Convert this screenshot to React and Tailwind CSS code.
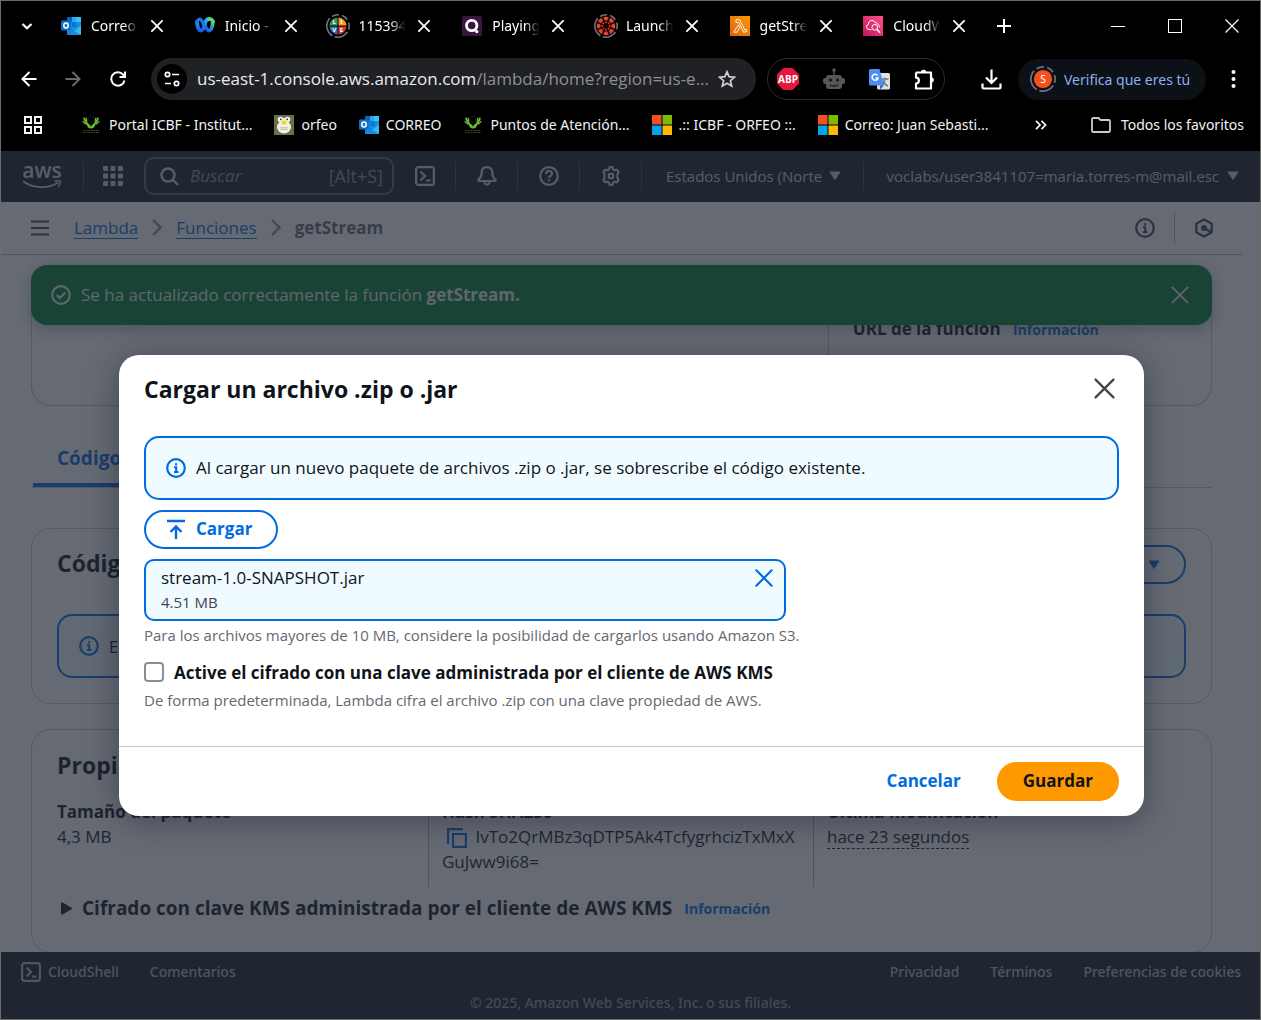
import React from "react";

/* ---------- Favicons and brand drawings ---------- */

function OutlookIcon() {
  return (
    <svg className="size-5 shrink-0" viewBox="0 0 20 20" aria-hidden="true">
      <rect x="6" y="1" width="14" height="14" fill="#1490df" />
      <rect x="6" y="1" width="5" height="5" fill="#0364b8" />
      <rect x="11" y="1" width="9" height="5" fill="#28a8ea" />
      <rect x="15" y="1" width="5" height="5" fill="#3cc0f5" />
      <rect x="11" y="6" width="4.500" height="5" fill="#0a78d0" />
      <path d="M6 9.500 13 14l7-4.500V18a1 1 0 0 1-1 1H7a1 1 0 0 1-1-1z" fill="#1688dc" />
      <path d="M20 9.500V18a1 1 0 0 1-1 1H8z" fill="#35b8f1" />
      <path d="m8 19 5-4.200 6.500 4.200z" fill="#1a8be0" />
      <rect x="0" y="4.500" width="10" height="10" rx="1" fill="#0f6fc8" />
      <ellipse cx="5" cy="9.500" rx="2.200" ry="2.500" fill="none" stroke="#fff" strokeWidth="1.500" />
    </svg>
  );
}

function WebexIcon() {
  return (
    <svg className="size-5 shrink-0" viewBox="0 0 20 20" fill="none" aria-hidden="true">
      <defs>
        <linearGradient id="wx1" x1="0" y1="0" x2="0" y2="1">
          <stop offset="0" stopColor="#1fb4e8" />
          <stop offset="1" stopColor="#1c5bf0" />
        </linearGradient>
        <linearGradient id="wx2" x1="0" y1="1" x2="1" y2="0">
          <stop offset="0" stopColor="#1648d8" />
          <stop offset="0.500" stopColor="#2383f0" />
          <stop offset="1" stopColor="#5fdc6a" />
        </linearGradient>
      </defs>
      <path d="M17.800 5.500c-.3 5-1.600 9-4 9s-3.500-4-4.500-7" stroke="url(#wx2)" strokeWidth="3.800" strokeLinecap="round" />
      <path d="M2 6c.3 4.500 1.700 8.500 4 8.500 2.800 0 3.200-5 4.500-8.500.8-1.800 2-3 3.500-3" stroke="url(#wx1)" strokeWidth="3.800" strokeLinecap="round" />
      <path d="M2.200 6c.4-2.400 2.200-3.400 3.600-2.400C7.500 4.800 8 7.500 9 10" stroke="#1d74f0" strokeWidth="3.200" strokeLinecap="round" />
      <path d="M14 3.200c2.300-.4 3.700.7 3.900 2.600" stroke="#57d977" strokeWidth="3.600" strokeLinecap="round" />
    </svg>
  );
}

function DashedRing() {
  return (
    <circle cx="12" cy="12" r="11.200" fill="none" stroke="#6f7276" strokeWidth="1.600" strokeDasharray="20 3 7 3 7 3 7 3 14.400 3" transform="rotate(120 12 12)" />
  );
}

function LiveIcon() {
  return (
    <svg className="size-6 shrink-0" viewBox="0 0 24 24" aria-hidden="true">
      <DashedRing />
      <path d="M11.500 11.500V3.500a8.500 8.500 0 0 0-8 8z" fill="#2e9e57" />
      <path d="M12.500 11.500V3.500a8.500 8.500 0 0 1 8 8z" fill="#f0a023" />
      <path d="M11.500 12.500v8a8.500 8.500 0 0 1-8-8z" fill="#2f6fc0" />
      <path d="M12.500 12.500v8a8.500 8.500 0 0 0 8-8z" fill="#d8392f" />
      <g fill="#fff" fontSize="6" fontWeight="700" fontFamily="Open Sans, sans-serif" textAnchor="middle">
        <text x="8.300" y="10.200">L</text>
        <text x="15.500" y="10.200">I</text>
        <text x="8.300" y="18.200">V</text>
        <text x="15.500" y="18.200">E</text>
      </g>
    </svg>
  );
}

function QIcon() {
  return (
    <svg className="size-5 shrink-0" viewBox="0 0 20 20" aria-hidden="true">
      <rect width="20" height="20" rx="2" fill="#38173f" />
      <circle cx="9.700" cy="9.500" r="5.200" fill="none" stroke="#fff" strokeWidth="2.800" />
      <circle cx="14.800" cy="15.600" r="1.700" fill="#fff" />
    </svg>
  );
}

function CanvasIcon() {
  const a = [0, 45, 90, 135, 180, 225, 270, 315];
  return (
    <svg className="size-6 shrink-0" viewBox="0 0 24 24" aria-hidden="true">
      <DashedRing />
      <circle cx="12" cy="12" r="9.200" fill="#1a0503" />
      {a.map((d) => (
        <g key={d} transform={`rotate(${d} 12 12)`}>
          <path d="M9.300 3.200a9.200 9.200 0 0 1 5.400 0l-.9 2.400a2 2 0 0 1-3.600 0z" fill="#e8432d" />
          <circle cx="12" cy="8.300" r="0.900" fill="#e8432d" />
        </g>
      ))}
    </svg>
  );
}

function LambdaIcon() {
  return (
    <svg className="size-5 shrink-0" viewBox="0 0 20 20" aria-hidden="true">
      <defs>
        <linearGradient id="lam" x1="0" y1="1" x2="1" y2="0">
          <stop offset="0" stopColor="#d86613" />
          <stop offset="1" stopColor="#f90" />
        </linearGradient>
      </defs>
      <rect width="20" height="20" fill="url(#lam)" />
      <path d="M6 3.800h3.800l5 10.200 1.500-.6.600 1.800-3.200 1.200-4.700-9.800H6zM8.300 9 3.800 16.200h3.200l2.800-5z" fill="none" stroke="#fff" strokeWidth="0.900" strokeLinejoin="round" />
    </svg>
  );
}

function CloudWatchIcon() {
  return (
    <svg className="size-5 shrink-0" viewBox="0 0 20 20" aria-hidden="true">
      <defs>
        <linearGradient id="cw" x1="0" y1="1" x2="1" y2="0">
          <stop offset="0" stopColor="#c21560" />
          <stop offset="1" stopColor="#ff4f8b" />
        </linearGradient>
      </defs>
      <rect width="20" height="20" fill="url(#cw)" />
      <g fill="none" stroke="#fff" strokeWidth="1" strokeLinecap="round">
        <path d="M8 13.500H6.200a2.700 2.700 0 0 1-.7-5.300c-.1-2.300 1.500-3.700 3.400-3.700 1.700 0 2.800.9 3.300 2.200 1.300-.5 2.400.3 2.500 1.700 1.300.3 2 1.200 2 2.500" />
        <circle cx="11.800" cy="11.300" r="2.900" />
        <path d="m14 13.500 2.700 2.800" strokeWidth="1.500" />
      </g>
    </svg>
  );
}

function HandsIcon() {
  return (
    <svg className="size-5 shrink-0" viewBox="0 0 20 20" fill="none" aria-hidden="true">
      <circle cx="9" cy="4" r="3" stroke="#3a3a3a" strokeWidth="0.800" strokeDasharray="1.500 1" />
      <path d="M2.200 3.500c.8 3 2.600 5 5.300 7.800M15.800 3.500c-.8 3-2.600 5-5.300 7.800" stroke="#6cb83a" strokeWidth="2" strokeLinecap="round" />
      <path d="m1 6.500 2.500 2.500M4.200 3l.6 3.500M17 6.500 14.500 9M13.800 3l-.6 3.500" stroke="#6cb83a" strokeWidth="1.200" strokeLinecap="round" />
      <path d="M4.500 8.500c2.200.2 3.800 1.400 4.500 3.400.7-2 2.300-3.200 4.500-3.400-.3 3-2 5-4.500 5s-4.200-2-4.500-5z" fill="#6cb83a" />
      <path d="M1 15.500h16M1 17.500h16" stroke="#33421f" strokeWidth="1" strokeDasharray="2 0.600" />
    </svg>
  );
}

function OrfeoIcon() {
  return (
    <svg className="size-5 shrink-0" viewBox="0 0 20 20" aria-hidden="true">
      <rect width="20" height="20" fill="#6b7040" />
      <ellipse cx="10" cy="12" rx="7" ry="6.500" fill="#f1f1ea" />
      <circle cx="6.500" cy="4.500" r="2.800" fill="#f1f1ea" />
      <circle cx="13.500" cy="4.500" r="2.800" fill="#f1f1ea" />
      <circle cx="10" cy="7" r="4" fill="#f1f1ea" />
      <circle cx="6.800" cy="4.300" r="0.900" fill="#333" />
      <circle cx="13.200" cy="4.300" r="0.900" fill="#333" />
      <path d="M7.200 6.500 10 5.500l2.800 1-1 2.500L10 9.800 8.200 9z" fill="#f1d51e" />
      <path d="M6 12.800h8M6.500 14.500h7" stroke="#b9b9ae" strokeWidth="1" />
    </svg>
  );
}

function MicrosoftIcon() {
  return (
    <svg className="size-5 shrink-0" viewBox="0 0 20 20" aria-hidden="true">
      <rect width="9.500" height="9.500" fill="#f25022" />
      <rect x="10.500" width="9.500" height="9.500" fill="#7fba00" />
      <rect y="10.500" width="9.500" height="9.500" fill="#00a4ef" />
      <rect x="10.500" y="10.500" width="9.500" height="9.500" fill="#ffb900" />
    </svg>
  );
}

/* ---------- Line icons ---------- */

function CrossIcon({ className, width = 2 }) {
  return (
    <svg className={className} viewBox="0 0 20 20" fill="none" stroke="currentColor" strokeWidth={width} strokeLinecap="round" aria-hidden="true">
      <path d="m1.500 1.500 17 17M18.500 1.500l-17 17" />
    </svg>
  );
}

function InfoIcon() {
  return (
    <svg className="size-5 shrink-0" viewBox="0 0 20 20" fill="none" stroke="currentColor" strokeWidth="2.200" aria-hidden="true">
      <circle cx="10" cy="10" r="8.800" />
      <path d="M8 9.200h2.200v4.500M8 14h4.400M9 6.300h2.200" strokeWidth="2" />
    </svg>
  );
}

function CaretDown() {
  return (
    <svg className="h-[10px] w-3 shrink-0" viewBox="0 0 12 10" aria-hidden="true">
      <path d="M1 1h10L6 8.500z" fill="currentColor" stroke="currentColor" strokeLinejoin="round" />
    </svg>
  );
}

function ShellIcon() {
  return (
    <svg className="size-5 shrink-0" viewBox="0 0 20 20" fill="none" stroke="currentColor" strokeWidth="2.200" aria-hidden="true">
      <rect x="1.100" y="1.100" width="17.800" height="17.800" rx="2.500" />
      <path d="m5.500 5.500 4.500 4.500-4.500 4.500M11 14.500h4.500" />
    </svg>
  );
}

/* ---------- Browser frame ---------- */

const tabs = [
  { icon: <OutlookIcon />, title: "Correo" },
  { icon: <WebexIcon />, title: "Inicio -" },
  { icon: <LiveIcon />, title: "115394", big: true },
  { icon: <QIcon />, title: "Playing" },
  { icon: <CanvasIcon />, title: "Launch", big: true },
  { icon: <LambdaIcon />, title: "getStre" },
  { icon: <CloudWatchIcon />, title: "CloudW" },
];

function TabStrip() {
  return (
    <div className="flex h-[49px] items-center text-white">
      <button aria-label="Buscar pestañas" className="flex w-[60px] pl-5">
        <svg className="size-3" viewBox="0 0 12 12" fill="none" stroke="currentColor" strokeWidth="2.200"><path d="m1.500 4 4.500 4.200L10.500 4" /></svg>
      </button>
      <div className="flex min-w-0 flex-1">
        {tabs.map((t) => (
          <div key={t.title} className="flex min-w-0 flex-1 items-center">
            <span className={t.big ? "-mx-[2px] flex" : "flex"}>{t.icon}</span>
            <span className="ml-[10px] w-[50px] text-[14px] leading-6 whitespace-nowrap [mask-image:linear-gradient(to_right,#000_65%,transparent_95%)]">{t.title}</span>
            <button aria-label="Cerrar pestaña" className="ml-[10px]"><CrossIcon className="size-3" width={3} /></button>
          </div>
        ))}
      </div>
      <button aria-label="Nueva pestaña">
        <svg className="size-[14px]" viewBox="0 0 14 14" stroke="currentColor" strokeWidth="2"><path d="M7 0v14M0 7h14" /></svg>
      </button>
      <div className="ml-[100px] flex items-center gap-[43px] pr-[21px]">
        <button aria-label="Minimizar"><svg className="size-[14px]" viewBox="0 0 14 14" stroke="currentColor"><path d="M0 7.500h14" /></svg></button>
        <button aria-label="Maximizar"><svg className="size-[14px]" viewBox="0 0 14 14" fill="none" stroke="currentColor"><rect x=".5" y=".5" width="13" height="13" /></svg></button>
        <button aria-label="Cerrar"><svg className="size-[14px]" viewBox="0 0 14 14" stroke="currentColor" strokeWidth="1.200"><path d="m.5.5 13 13M13.500.5l-13 13" /></svg></button>
      </div>
    </div>
  );
}

function Toolbar() {
  return (
    <div className="flex h-[58px] items-center pl-5 text-white">
      <button aria-label="Atrás"><svg className="size-4" viewBox="0 0 16 16" fill="none" stroke="currentColor" strokeWidth="2"><path d="M15.500 8H2M8.500 1 1.500 8l7 7" /></svg></button>
      <button aria-label="Adelante" className="ml-7 text-[#6a6a6a]"><svg className="size-4" viewBox="0 0 16 16" fill="none" stroke="currentColor" strokeWidth="2"><path d="M.5 8H14M7.500 1l7 7-7 7" /></svg></button>
      <button aria-label="Recargar" className="ml-[29px]"><svg className="size-4" viewBox="0 0 16 16" fill="none" stroke="currentColor" strokeWidth="2"><path d="M14.500 9.500A6.700 6.700 0 1 1 13 3.500L14.500 5M15 .5V6H9.500" /></svg></button>
      <div className="ml-[25px] flex h-[42px] min-w-0 flex-1 items-center rounded-full bg-[#202124] pr-5 pl-[6px]">
        <button aria-label="Información del sitio" className="flex size-[30px] shrink-0 items-center justify-center rounded-full bg-black">
          <svg className="size-4" viewBox="0 0 16 16" fill="none" stroke="currentColor" strokeWidth="1.700"><circle cx="3.500" cy="3.500" r="2.200" /><path d="M8 3.500h7M1 12.500h6" /><circle cx="12.500" cy="12.500" r="2.200" /></svg>
        </button>
        <div className="ml-[10px] min-w-0 flex-1 font-['Open_Sans','Noto_Sans',sans-serif] text-[17px] whitespace-nowrap text-[#8d9094]">
          <span className="text-[#e8eaed]">us-east-1.console.aws.amazon.com</span>/lambda/home?region=us-e...
        </div>
        <button aria-label="Añadir a favoritos" className="ml-1 text-[#cdcfd2]">
          <svg className="size-[18px]" viewBox="0 0 18 18" fill="none" stroke="currentColor" strokeWidth="1.700"><path d="m9 1.800 2.100 4.900 5.400.5-4.100 3.500 1.300 5.300L9 13.200 4.300 16l1.300-5.300L1.500 7.200l5.400-.5z" /></svg>
        </button>
      </div>
      <div className="ml-[11px] flex h-[42px] w-[178px] shrink-0 items-center justify-between rounded-full border border-[#2d2d2d] pr-[9px] pl-[9px]">
        <button aria-label="Adblock Plus">
          <svg className="size-[22px]" viewBox="0 0 22 22"><path d="M6.500 0h9L22 6.500v9L15.500 22h-9L0 15.500v-9z" fill="#e8163c" /><text x="11" y="15" textAnchor="middle" fontSize="10" fontWeight="700" fontFamily="Open Sans, sans-serif" fill="#fff">ABP</text></svg>
        </button>
        <button aria-label="Asistente">
          <svg className="size-[22px]" viewBox="0 0 22 22"><g fill="#565656"><rect x="3" y="7" width="16" height="14" rx="3" /><rect x="0" y="10" width="22" height="6" rx="2" /><circle cx="11" cy="2" r="1.800" /><path d="M10.300 2h1.400v6h-1.400z" /></g><circle cx="7.500" cy="12" r="1.600" fill="#161616" /><circle cx="14.500" cy="12" r="1.600" fill="#161616" /><path d="M7 17c2.500 1.300 5.500 1.300 8 0" stroke="#161616" strokeWidth="1.300" fill="none" /></svg>
        </button>
        <button aria-label="Traductor de Google">
          <svg className="size-[21px]" viewBox="0 0 21 21"><rect x="8" y="4" width="13" height="16.500" rx="1.500" fill="#dfe2e5" /><path d="M12.500 10h7M16 8.500V10c0 3-1.500 5.500-4 7M14 11.500c.7 2.500 2.300 4.500 5 5.700" stroke="#70757a" strokeWidth="1.300" fill="none" /><path d="M1.500 0h9L15 16.500H1.500A1.500 1.500 0 0 1 0 15V1.500A1.500 1.500 0 0 1 1.500 0z" fill="#4f8df5" /><path d="m15 16.500-4 4v-4z" fill="#3060c8" /><path d="M8.600 6.600A3 3 0 1 0 9 9H6.500" stroke="#fff" strokeWidth="1.500" fill="none" /></svg>
        </button>
        <button aria-label="Extensiones">
          <svg className="size-[21px]" viewBox="0 0 21 21" fill="none" stroke="currentColor" strokeWidth="2.200"><path d="M2 3.500h15v5.300M17 13.200v6.300H2v-5a2.900 2.900 0 0 0 0-5.800V3.500M17 8v6" strokeLinejoin="round" /><path d="M7.200 3.500a2.400 2.400 0 0 1 4.800 0zM17 8.600a2.400 2.400 0 0 1 0 4.800z" fill="currentColor" strokeWidth="1" /></svg>
        </button>
      </div>
      <button aria-label="Descargas" className="ml-9">
        <svg className="size-[21px]" viewBox="0 0 21 21" fill="none" stroke="currentColor" strokeWidth="2.200"><path d="M10.500.5V14M5 8.500l5.500 5.500L16 8.500M1.500 14.500v4a1 1 0 0 0 1 1h16a1 1 0 0 0 1-1v-4" /></svg>
      </button>
      <button className="ml-4 flex h-[41px] w-[188px] shrink-0 items-center rounded-full bg-[#0c1017] pl-3 text-[14px] text-[#8ab0f0]">
        <svg className="size-[26px]" viewBox="0 0 24 24" aria-hidden="true"><DashedRing /><circle cx="12" cy="12" r="8.400" fill="#f4511e" /><text x="12" y="15.500" textAnchor="middle" fontSize="9.500" fill="#fff">S</text></svg>
        <span className="ml-2 whitespace-nowrap">Verifica que eres tú</span>
      </button>
      <button aria-label="Menú de Chrome" className="mr-[24px] ml-[25px]">
        <svg className="h-[18px] w-[5px]" viewBox="0 0 5 18" fill="currentColor"><circle cx="2.500" cy="2" r="2" /><circle cx="2.500" cy="9" r="2" /><circle cx="2.500" cy="16" r="2" /></svg>
      </button>
    </div>
  );
}

const bookmarks = [
  { icon: <HandsIcon />, label: "Portal ICBF - Institut..." },
  { icon: <OrfeoIcon />, label: "orfeo" },
  { icon: <OutlookIcon />, label: "CORREO" },
  { icon: <HandsIcon />, label: "Puntos de Atención..." },
  { icon: <MicrosoftIcon />, label: ".:: ICBF - ORFEO ::." },
  { icon: <MicrosoftIcon />, label: "Correo: Juan Sebasti..." },
];

function BookmarksBar() {
  return (
    <nav aria-label="Favoritos" className="flex h-[43px] items-center pb-[10px] pl-[23px] text-[14px] whitespace-nowrap text-[#f1f3f4]">
      <button aria-label="Grupos de pestañas">
        <svg className="size-[18px]" viewBox="0 0 18 18" fill="none" stroke="currentColor" strokeWidth="2"><path d="M1 1h6v6H1zM11 1h6v6h-6zM1 11h6v6H1zM11 11h6v6h-6z" /></svg>
      </button>
      <div className="ml-10 flex items-center gap-[22px]">
        {bookmarks.map((b) => (
          <a key={b.label} href="#" className="flex items-center gap-[7px]">{b.icon}{b.label}</a>
        ))}
      </div>
      <button aria-label="Más favoritos" className="ml-auto">
        <svg className="h-[10px] w-3" viewBox="0 0 12 10" fill="none" stroke="currentColor" strokeWidth="1.800"><path d="m1 .8 4 4.200-4 4.200M6.500.8l4 4.200-4 4.200" /></svg>
      </button>
      <a href="#" className="mr-4 ml-11 flex items-center gap-[10px]">
        <svg className="h-4 w-5" viewBox="0 0 20 16" fill="none" stroke="#c9cbce" strokeWidth="1.800"><path d="M1 2.200A1.200 1.200 0 0 1 2.200 1H7.500l2 2h8.300A1.200 1.200 0 0 1 19 4.200v9.600a1.200 1.200 0 0 1-1.200 1.200H2.200A1.200 1.200 0 0 1 1 13.800z" /></svg>
        Todos los favoritos
      </a>
    </nav>
  );
}

/* ---------- AWS console ---------- */

function NavCell({ label, children }) {
  return (
    <div className="flex h-[30px] w-[62px] shrink-0 items-center justify-center border-r border-[#424650]">
      <button aria-label={label}>{children}</button>
    </div>
  );
}

function ConsoleHeader() {
  return (
    <header className="flex h-[51px] items-center bg-[#161d26] pb-px text-[15px] font-medium text-[#d0d2d6]">
      <a href="#" aria-label="AWS" className="ml-[21px] flex w-10 flex-col items-center pb-1">
        <span className="text-[21px] leading-5 font-semibold">aws</span>
        <svg className="h-[9px] w-10" viewBox="0 0 40 9" fill="none" stroke="currentColor" strokeWidth="1.800" strokeLinecap="round"><path d="M1.500 1.500c10 7 24 7.500 34 1.500" /><path d="M33 1.200c2-.6 4-.8 5.200-.2.500 1.200-.3 3.600-1.800 5.500" strokeWidth="1.500" /></svg>
      </a>
      <div className="ml-[21px] h-[30px] w-px bg-[#424650]" />
      <button aria-label="Servicios" className="ml-[19px]">
        <svg className="size-5" viewBox="0 0 20 20" fill="currentColor">
          {[0, 7.5, 15].map((y) => [0, 7.5, 15].map((x) => <rect key={`${x}-${y}`} x={x} y={y} width="5" height="5" rx="1" />))}
        </svg>
      </button>
      <label className="ml-[21px] flex h-[38px] w-[250px] items-center rounded-[10px] border-2 border-[#5b616c] pr-[9px] pl-[14px]">
        <svg className="size-[19px] shrink-0" viewBox="0 0 19 19" fill="none" stroke="currentColor" strokeWidth="2.400"><circle cx="8" cy="8" r="6.500" /><path d="m12.500 12.500 5.500 5.500" /></svg>
        <input type="search" aria-label="Buscar" placeholder="Buscar" className="ml-[11px] w-0 min-w-0 flex-1 bg-transparent text-[17px] italic outline-none placeholder:text-[#8a909b]" />
        <span className="text-[18px] font-normal text-[#8a909b]">[Alt+S]</span>
      </label>
      <NavCell label="CloudShell"><ShellIcon /></NavCell>
      <NavCell label="Notificaciones">
        <svg className="size-5" viewBox="0 0 20 20" fill="none" stroke="currentColor" strokeWidth="2.200" strokeLinejoin="round"><path d="M10 1.200C6.500 1.200 4.700 3.300 4.700 6.500 4.700 10.500 3.500 12 1.500 13.500V15h17v-1.500c-2-1.500-3.200-3-3.200-7C15.300 3.300 13.500 1.200 10 1.200z" /><path d="M7.300 15.500c.2 2 1.200 3 2.700 3s2.500-1 2.700-3" /></svg>
      </NavCell>
      <NavCell label="Ayuda">
        <svg className="size-5" viewBox="0 0 20 20" fill="none" stroke="currentColor" strokeWidth="2.200"><circle cx="10" cy="10" r="8.800" /><path d="M7 8c0-1.900 1.200-3 3-3s3 1.100 3 2.700c0 2-3 2.200-3 4.300M10 13.300v2" /></svg>
      </NavCell>
      <NavCell label="Configuración">
        <svg className="size-5" viewBox="0 0 20 20" fill="none" stroke="currentColor" strokeWidth="2.200" strokeLinejoin="round"><path d="M8.500 1.200h3l.7 2.300 1.400.8 2.300-.6 1.700 2.300L16.400 8.200v3.600l1.200 2.200-1.700 2.300-2.300-.6-1.400.8-.7 2.300h-3l-.7-2.300-1.400-.8-2.300.6L2.400 14l1.200-2.200V8.200L2.400 6l1.700-2.300 2.300.6 1.400-.8z" /><circle cx="10" cy="10" r="2.400" /></svg>
      </NavCell>
      <button className="flex h-[30px] w-[222px] shrink-0 items-center gap-[7px] border-r border-[#424650] pl-6 whitespace-nowrap">Estados Unidos (Norte <CaretDown /></button>
      <button className="mr-[21px] ml-auto flex items-center gap-[8px] whitespace-nowrap">voclabs/user3841107=maria.torres-m@mail.esc <CaretDown /></button>
    </header>
  );
}

function Chevron() {
  return (
    <svg className="h-[17px] w-[10px]" viewBox="0 0 10 17" fill="none" stroke="#8c8c94" strokeWidth="2.400" aria-hidden="true"><path d="m1 1 7.500 7.500L1 16" /></svg>
  );
}

function Breadcrumbs() {
  return (
    <div className="mr-[18px] flex h-[53px] items-center border-b border-[#b4b4bb] pb-px pl-[30px] text-[17px] leading-[21px]">
      <button aria-label="Abrir navegación" className="text-[#424650]">
        <svg className="h-4 w-[18px]" viewBox="0 0 18 16" stroke="currentColor" strokeWidth="2.200"><path d="M0 1.500h18M0 8h18M0 14.500h18" /></svg>
      </button>
      <nav aria-label="Ruta" className="ml-[25px] flex items-center gap-[14px]">
        <a href="#" className="border-b border-[#006ce0] text-[#006ce0]">Lambda</a>
        <Chevron />
        <a href="#" className="border-b border-[#006ce0] text-[#006ce0]">Funciones</a>
        <Chevron />
        <span className="font-bold text-[#656871]">getStream</span>
      </nav>
      <div className="mr-[28px] ml-auto flex items-center text-[#424650]">
        <button aria-label="Información"><InfoIcon /></button>
        <div className="mx-[19px] h-8 w-px bg-[#b4b4bb]" />
        <button aria-label="Amazon Q">
          <svg className="size-5" viewBox="0 0 20 20" fill="none" stroke="currentColor" strokeWidth="2.200" strokeLinejoin="round"><path d="m10 1.500 7.700 4.300v8.400L10 18.500l-7.700-4.300V5.800z" /><path d="m10 10 7 4" /><circle cx="10" cy="10" r="2" fill="currentColor" /></svg>
        </button>
      </div>
    </div>
  );
}

function FunctionPage() {
  return (
    <main className="mr-[18px] -mb-px flex-1 overflow-hidden px-[30px] pt-[10px] text-[17px] leading-[25px]">
      <div role="status" className="relative flex h-[60px] items-center rounded-[16px] bg-[#00802f] pr-[23px] pl-5 font-medium text-[#ebebf0] shadow-[0_4px_16px_rgba(0,7,22,0.3)]">
        <svg className="size-5" viewBox="0 0 20 20" fill="none" stroke="currentColor" strokeWidth="2.200" aria-hidden="true"><circle cx="10" cy="10" r="8.800" /><path d="m5.800 10 3 3 5.500-5.500" /></svg>
        <p className="ml-[10px] pb-0.5">Se ha actualizado correctamente la función <b>getStream.</b></p>
        <button aria-label="Cerrar aviso" className="ml-auto"><CrossIcon className="size-[18px]" /></button>
      </div>

      <section className="-mt-4 grid h-[97px] grid-cols-[27fr_13fr] rounded-b-[20px] border border-t-0 border-[#c6c6cd]">
        <div />
        <div className="mb-[46px] border-l border-[#c6c6cd] pt-[7px] pl-6 text-[#0f141a]">
          <h3 className="font-bold">URL de la función <a href="#" className="ml-2 text-[14px] text-[#006ce0]">Información</a></h3>
          <p>-</p>
        </div>
      </section>

      <div role="tablist" className="mt-8 flex border-b border-[#c6c6cd]">
        <button role="tab" aria-selected="true" className="ml-[2px] rounded-t-sm border-b-4 border-[#006ce0] px-6 pt-2 pb-3 text-[19px] font-bold text-[#006ce0]">Código</button>
      </div>

      <section className="mt-10 h-[176px] rounded-[20px] border border-[#c6c6cd] px-[25px] pt-4">
        <div className="flex h-[39px] items-center justify-between">
          <h2 className="pb-0.5 text-[23px] font-bold text-[#0f141a]">Código</h2>
          <button className="flex h-[39px] items-center gap-2 rounded-full border-2 border-[#006ce0] px-6 font-bold text-[#006ce0]">Cargar desde <CaretDown /></button>
        </div>
        <div className="mt-[30px] flex h-16 items-center gap-[10px] rounded-[15px] border-2 border-[#006ce0] bg-[#f0fbff] px-5 text-[#0f141a]">
          <span className="text-[#006ce0]"><InfoIcon /></span>El
        </div>
      </section>

      <section className="mt-[25px] h-[224px] rounded-[20px] border border-[#c6c6cd] px-[25px] pt-[21px] text-[#0f141a]">
        <h2 className="text-[23px] leading-7 font-bold">Propiedades</h2>
        <dl className="mt-5 grid grid-cols-3 gap-[26px]">
          <div>
            <dt className="font-bold">Tamaño del paquete</dt>
            <dd>4,3 MB</dd>
          </div>
          <div className="-ml-[14px] border-l border-[#b4b4bb] pb-[13px] pl-[13px]">
            <dt className="font-bold">Hash SHA256</dt>
            <dd className="break-all">
              <button aria-label="Copiar hash" className="mr-1 ml-[5px] align-middle text-[#006ce0]">
                <svg className="size-5" viewBox="0 0 20 20" fill="none" stroke="currentColor" strokeWidth="2.200"><path d="M1.100 16V1.100H16M6 6h12.900v12.900H6z" /></svg>
              </button>{" "}
              IvTo2QrMBz3qDTP5Ak4TcfygrhcizTxMxXGuJww9i68=
            </dd>
          </div>
          <div className="-ml-[14px] border-l border-[#b4b4bb] pl-[13px]">
            <dt className="font-bold">Última modificación</dt>
            <dd><span className="inline-block border-b border-dashed border-[#0f141a] leading-[22px]">hace 23 segundos</span></dd>
          </div>
        </dl>
        <div className="mt-[9px] flex items-center">
          <button className="flex items-center gap-[10px] text-[19px] font-bold">
            <svg className="ml-1 h-[13px] w-[11px]" viewBox="0 0 11 13" fill="currentColor" aria-hidden="true"><path d="M0 1.200v10.600a1 1 0 0 0 1.500.8l9-5.300a1 1 0 0 0 0-1.600l-9-5.300A1 1 0 0 0 0 1.200z" /></svg>
            Cifrado con clave KMS administrada por el cliente de AWS KMS
          </button>
          <a href="#" className="ml-3 text-[14px] font-bold text-[#006ce0]">Información</a>
        </div>
      </section>
    </main>
  );
}

function ConsoleFooter() {
  return (
    <footer className="relative h-[67px] bg-[#161d26] pt-[7px] font-['Noto_Sans','Open_Sans',sans-serif] text-[14px] leading-[25px] font-medium text-[#b6bac1]">
      <div className="flex items-center gap-[31px] pr-[19px] pl-5">
        <a href="#" className="flex items-center gap-[7px]"><ShellIcon />CloudShell</a>
        <a href="#">Comentarios</a>
        <a href="#" className="ml-auto">Privacidad</a>
        <a href="#">Términos</a>
        <a href="#">Preferencias de cookies</a>
      </div>
      <p className="mt-[6px] text-center text-[#8c919b]">© 2025, Amazon Web Services, Inc. o sus filiales.</p>
    </footer>
  );
}

function UploadDialog() {
  return (
    <div role="dialog" aria-modal="true" aria-labelledby="dlg-title" className="w-full max-w-[1025px] rounded-[20px] bg-white text-[17px] leading-[25px] text-[#0f141a] shadow-[0_4px_32px_rgba(0,7,22,0.35)]">
      <div className="px-[25px] pt-5 pb-[35px]">
        <div className="flex items-center justify-between pr-1">
          <h1 id="dlg-title" className="text-[23px] leading-7 font-bold">Cargar un archivo .zip o .jar</h1>
          <button aria-label="Cerrar" className="text-[#424650]"><CrossIcon className="size-[21px]" width={2.2} /></button>
        </div>
        <div className="mt-[33px] flex h-16 items-center gap-[10px] rounded-[15px] border-2 border-[#006ce0] bg-[#f0fbff] px-5">
          <span className="text-[#006ce0]"><InfoIcon /></span>
          <p>Al cargar un nuevo paquete de archivos .zip o .jar, se sobrescribe el código existente.</p>
        </div>
        <button className="mt-[10px] flex h-[39px] items-center gap-[10px] rounded-full border-2 border-[#006ce0] pr-6 pb-px pl-5 font-bold text-[#006ce0]">
          <svg className="size-5" viewBox="0 0 20 20" fill="none" stroke="currentColor" strokeWidth="2.400" aria-hidden="true"><path d="M1 2h18M10 20V8M4.500 13 10 7.500l5.500 5.500" /></svg>
          Cargar
        </button>
        <div className="mt-[10px] flex h-[62px] max-w-[642px] items-start justify-between rounded-[10px] border-2 border-[#006ce0] bg-[#f0fbff] pt-1 pr-[11px] pl-[15px]">
          <div>
            <p>stream-1.0-SNAPSHOT.jar</p>
            <p className="text-[15px] text-[#424650]">4.51 MB</p>
          </div>
          <button aria-label="Quitar archivo" className="mt-1 text-[#006ce0]"><CrossIcon className="size-[18px]" width={2.4} /></button>
        </div>
        <p className="mt-1 text-[15px] leading-5 text-[#656871]">Para los archivos mayores de 10 MB, considere la posibilidad de cargarlos usando Amazon S3.</p>
        <div className="mt-[15px] flex items-center gap-[10px]">
          <input id="kms" type="checkbox" aria-describedby="kms-note" className="size-5 appearance-none rounded-[4px] border-2 border-[#8c8c94] bg-white" />
          <label htmlFor="kms" className="font-bold">Active el cifrado con una clave administrada por el cliente de AWS KMS</label>
        </div>
        <p id="kms-note" className="mt-[5px] mb-px text-[15px] leading-5 text-[#656871]">De forma predeterminada, Lambda cifra el archivo .zip con una clave propiedad de AWS.</p>
      </div>
      <div className="flex justify-end gap-[10px] border-t border-[#c6c6cd] px-[25px] py-[15px]">
        <button className="h-[39px] rounded-full px-[26px] pb-px font-bold text-[#006ce0]">Cancelar</button>
        <button className="h-[39px] rounded-full bg-[#ff9900] px-[26px] pb-px font-bold">Guardar</button>
      </div>
    </div>
  );
}

export default function App() {
  return (
    <div className="flex min-h-screen flex-col border border-[#6b6d6d] bg-black font-['Open_Sans','Noto_Sans',sans-serif]">
      <div className="font-['Noto_Sans','Open_Sans',sans-serif]">
        <TabStrip />
        <Toolbar />
        <BookmarksBar />
      </div>
      <div className="relative flex flex-1 flex-col bg-white">
        <ConsoleHeader />
        <Breadcrumbs />
        <FunctionPage />
        <ConsoleFooter />
        <div className="absolute inset-0 flex items-center justify-center bg-[#232b37]/70 pl-0.5">
          <UploadDialog />
        </div>
      </div>
    </div>
  );
}
